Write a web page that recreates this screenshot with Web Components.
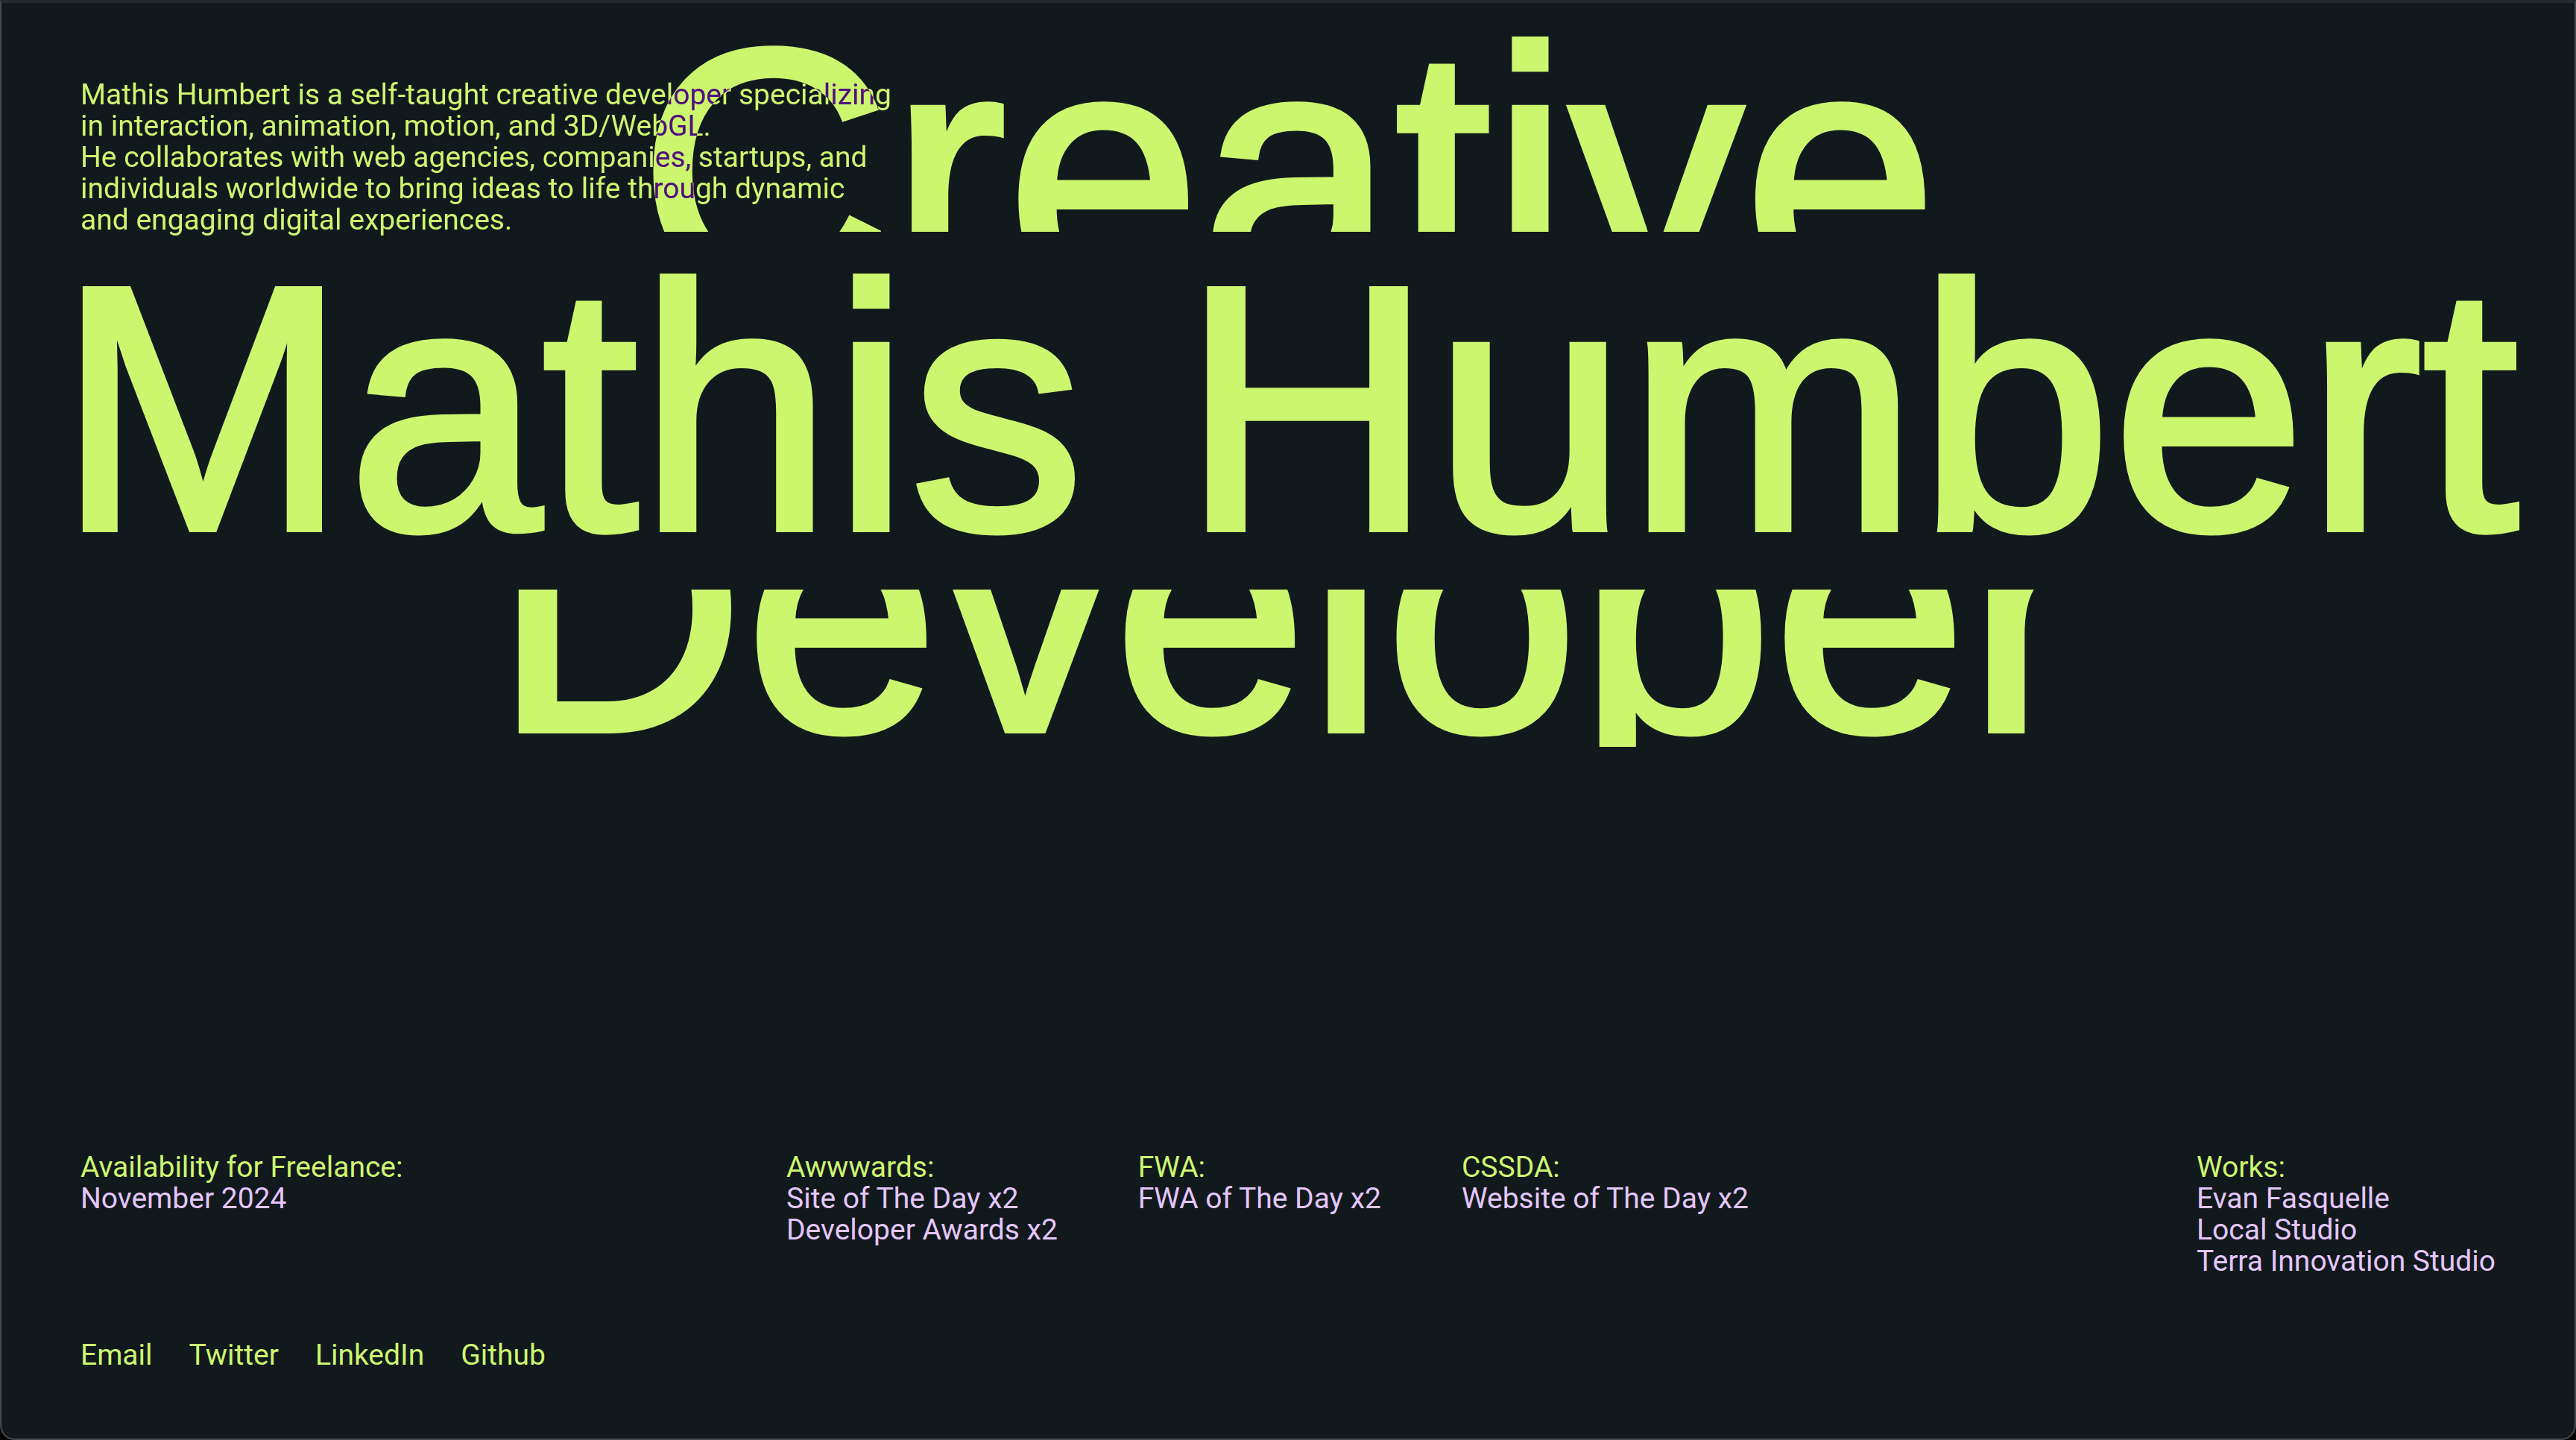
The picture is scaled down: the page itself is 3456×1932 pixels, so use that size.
<!DOCTYPE html>
<html lang="en">
<head>
<meta charset="utf-8">
<meta name="viewport" content="width=device-width, initial-scale=1">
<title>Mathis Humbert, Creative Developer</title>
<style>
  html { background: #000; }
  body {
    margin: 0;
    font: 400 39px/42px Roboto, "Liberation Sans", Arial, sans-serif;
    --lime: #cdf66f;
    --lilac: #e3c6fb;
    --night: #12191c;
  }
</style>
</head>
<body>

<portfolio-screen>
  <hero-title slot="hero">
    <title-row level="2" style="--height: 307px; --leading: 452px">Creative</title-row>
    <title-row level="1" style="--height: 480px; --leading: 474px">Mathis Humbert</title-row>
    <title-row level="2" align="end" style="--height: 211px; --leading: 368px">Developer</title-row>
    <p slot="intro">Mathis Humbert is a self-taught creative developer specializing<br>in interaction, animation, motion, and 3D/WebGL.<br>He collaborates with web agencies, companies, startups, and<br>individuals worldwide to bring ideas to life through dynamic<br>and engaging digital experiences.</p>
  </hero-title>

  <info-group slot="availability" heading="Availability for Freelance:">
    <li>November 2024</li>
  </info-group>

  <info-group slot="awards" heading="Awwwards:">
    <li>Site of The Day x2</li>
    <li>Developer Awards x2</li>
  </info-group>
  <info-group slot="awards" heading="FWA:">
    <li>FWA of The Day x2</li>
  </info-group>
  <info-group slot="awards" heading="CSSDA:">
    <li>Website of The Day x2</li>
  </info-group>

  <info-group slot="works" heading="Works:">
    <li><a href="#evan-fasquelle">Evan Fasquelle</a></li>
    <li><a href="#local-studio">Local Studio</a></li>
    <li><a href="#terra">Terra Innovation Studio</a></li>
  </info-group>

  <social-links slot="links">
    <a href="#email">Email</a>
    <a href="#twitter">Twitter</a>
    <a href="#linkedin">LinkedIn</a>
    <a href="#github">Github</a>
  </social-links>
</portfolio-screen>

<template id="screen-template">
  <style>
    :host {
      display: flex;
      flex-direction: column;
      box-sizing: border-box;
      min-height: 100vh;
      overflow: hidden;
      color: var(--lime);
      background: var(--night);
      border: 2px solid #45484c;
      border-top: 4px solid #25282c;
      border-radius: 0 0 20px 20px;
    }
    footer {
      display: grid;
      gap: 84px;
      margin-top: auto;
      padding: 0 106px 91px;
    }
    .info {
      display: grid;
      grid-template-columns: 947px 1fr max-content;
      align-items: start;
    }
    .awards { display: flex; gap: 108px; }
  </style>
  <slot name="hero"></slot>
  <footer>
    <div class="info">
      <slot name="availability"></slot>
      <div class="awards"><slot name="awards"></slot></div>
      <slot name="works"></slot>
    </div>
    <slot name="links"></slot>
  </footer>
</template>

<template id="hero-template">
  <style>
    /* Isolated, so the intro blends with the big letters and not with the page behind. */
    :host { display: block; position: relative; isolation: isolate; }
    ::slotted(p) {
      position: absolute;
      top: 102px;
      left: 106px;
      margin: 0;
      white-space: nowrap;
      mix-blend-mode: exclusion;
    }
  </style>
  <slot></slot>
  <slot name="intro"></slot>
</template>

<template id="row-template">
  <style>
    :host {
      display: flex;
      justify-content: center;
      align-items: flex-start;
      height: var(--height);
      overflow: hidden;
    }
    :host([align="end"]) { align-items: flex-end; }
    div {
      font-family: "Liberation Sans", Arial, sans-serif;
      font-size: 468px;
      line-height: var(--leading);
      font-weight: 400;
      white-space: nowrap;
      -webkit-text-stroke: 8px currentColor;
    }
  </style>
  <div role="heading"><slot></slot></div>
</template>

<template id="info-template">
  <style>
    :host { display: block; white-space: nowrap; }
    h3 { margin: 0; font: inherit; }
    ul { margin: 0; padding: 0; list-style: none; color: var(--lilac); }
    ::slotted(li) { list-style: none; }
  </style>
  <h3></h3>
  <ul><slot></slot></ul>
</template>

<template id="links-template">
  <style>
    :host { display: block; }
    nav { display: flex; gap: 49px; }
    ::slotted(a) { color: inherit; text-decoration: none; }
  </style>
  <nav aria-label="Contact"><slot></slot></nav>
</template>

<style>
  info-group a { color: inherit; text-decoration: none; }
</style>

<script>
  class TemplateElement extends HTMLElement {
    constructor() {
      super();
      const template = document.getElementById(this.constructor.template);
      this.attachShadow({ mode: 'open' }).append(template.content.cloneNode(true));
    }
  }

  class PortfolioScreen extends TemplateElement {
    static template = 'screen-template';
  }

  class HeroTitle extends TemplateElement {
    static template = 'hero-template';
  }

  class TitleRow extends TemplateElement {
    static template = 'row-template';
    connectedCallback() {
      this.shadowRoot.querySelector('[role="heading"]').setAttribute('aria-level', this.getAttribute('level') || '2');
    }
  }

  class InfoGroup extends TemplateElement {
    static template = 'info-template';
    connectedCallback() {
      this.shadowRoot.querySelector('h3').textContent = this.getAttribute('heading');
    }
  }

  class SocialLinks extends TemplateElement {
    static template = 'links-template';
  }

  customElements.define('portfolio-screen', PortfolioScreen);
  customElements.define('hero-title', HeroTitle);
  customElements.define('title-row', TitleRow);
  customElements.define('info-group', InfoGroup);
  customElements.define('social-links', SocialLinks);
</script>
</body>
</html>
